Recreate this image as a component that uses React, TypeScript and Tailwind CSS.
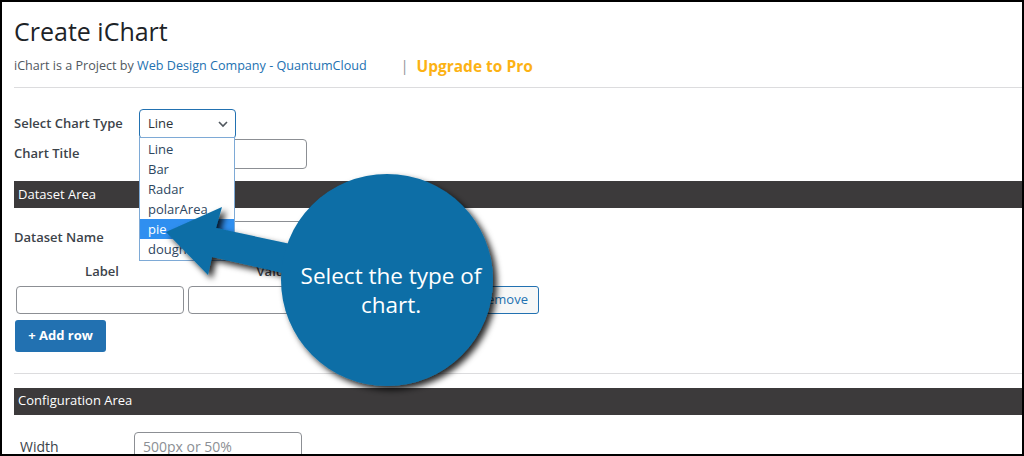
import React from "react";

const font = "font-['Segoe_UI','Open_Sans','Noto_Sans',sans-serif]";

function Bar({ children }: { children: React.ReactNode }) {
  return (
    <div className="h-[27px] bg-[#3c3a3b] flex items-center pl-[4px] text-white text-[13px]">
      {children}
    </div>
  );
}

export default function App() {
  const options = ["Line", "Bar", "Radar", "polarArea", "pie", "dough"];
  return (
    <div
      className={`relative w-[1024px] h-[456px] overflow-hidden bg-white border-2 border-black ${font} text-[#1d2327]`}
    >
      <div className="pl-[12px]">
        <h1 className="pt-[13px] text-[25px] leading-[32px] text-[#1d2327]">Create iChart</h1>
        <div className="mt-[9px] text-[12.6px] leading-[20px] text-[#50575e] flex items-center">
          <span>iChart is a Project by&nbsp;</span>
          <span className="text-[#2271b1]">Web Design Company - QuantumCloud</span>
          <span className="ml-[34px] mr-[8px] text-[#8c8f94] text-[14px]">|</span>
          <span className="font-bold text-[#fcb214] text-[15.5px]">Upgrade to Pro</span>
        </div>
        <div className="mt-[11px] h-px bg-[#dcdcde]" />

        <div className="mt-[21px] flex items-center h-[30px]">
          <div className="w-[125px] text-[13px] font-semibold text-[#3c434a]">Select Chart Type</div>
          <div className="w-[97px] h-[30px] border border-[#2271b1] rounded-[4px] flex items-center justify-between pl-[8px] pr-[6px] text-[13px] text-[#2c3338]">
            <span>Line</span>
            <svg width="12" height="12" viewBox="0 0 12 12">
              <path d="M2 4l4 4 4-4" fill="none" stroke="#50575e" strokeWidth="1.6" />
            </svg>
          </div>
        </div>
        <div className="flex items-center h-[30px]">
          <div className="w-[125px] text-[13px] font-semibold text-[#3c434a]">Chart Title</div>
          <div className="w-[168px] h-[30px] border border-[#8c8f94] rounded-[4px]" />
        </div>

        <div className="mt-[12px]">
          <Bar>Dataset Area</Bar>
        </div>

        <div className="mt-[13px] flex items-center h-[30px]">
          <div className="w-[125px] text-[13px] font-semibold text-[#3c434a] pt-[3px]">Dataset Name</div>
          <div className="w-[168px] h-[30px] border border-[#8c8f94] rounded-[4px]" />
        </div>

        <div className="mt-[11px] flex text-[13px] font-semibold text-[#3c434a] pl-[2px]">
          <div className="w-[172px] text-center">Label</div>
          <div className="w-[172px] text-center">Value</div>
        </div>
        <div className="mt-[4px] flex items-center gap-[4px] pl-[2px]">
          <div className="w-[168px] h-[28px] border border-[#8c8f94] rounded-[4px]" />
          <div className="w-[168px] h-[28px] border border-[#8c8f94] rounded-[4px]" />
        </div>
        <div className="mt-[6px] pl-[1px]">
          <div className="w-[91px] h-[32px] bg-[#2271b1] rounded-[3px] flex items-center justify-center text-white text-[13px] font-bold">
            + Add row
          </div>
        </div>

        <div className="mt-[21px] h-px bg-[#dcdcde]" />
        <div className="mt-[14px]">
          <Bar>Configuration Area</Bar>
        </div>
        <div className="mt-[17px] flex items-center h-[30px]">
          <div className="w-[120px] pl-[6px] text-[14px] text-[#3c434a]">Width</div>
          <div className="w-[168px] h-[30px] border border-[#8c8f94] rounded-[4px] flex items-center pl-[8px] text-[14px] text-[#8c8f94]">
            500px or 50%
          </div>
        </div>
      </div>

      {/* Remove button (partly hidden) */}
      <div className="absolute left-[440px] top-[284px] w-[97px] h-[28px] border border-[#2271b1] rounded-[3px] bg-[#f6f7f7] flex items-center justify-end pr-[10px] text-[13px] text-[#2271b1]">
        Remove
      </div>

      {/* Open dropdown list */}
      <div className="absolute left-[137px] top-[135px] w-[96px] border border-[#7eaad6] bg-white py-[1px]">
        {options.map((o) => (
          <div
            key={o}
            className={`h-[20px] leading-[20px] pl-[8px] text-[13px] ${
              o === "pie" ? "bg-[#2f8ff0] text-white" : "text-[#2c4660]"
            }`}
          >
            {o}
          </div>
        ))}
      </div>

      {/* Callout */}
      <svg
        className="absolute left-[-2px] top-[-2px] pointer-events-none"
        width="1024"
        height="456"
        viewBox="0 0 1024 456"
      >
        <defs>
          <filter id="sh" x="-20%" y="-20%" width="140%" height="140%">
            <feDropShadow dx="4" dy="4" stdDeviation="3" floodColor="#000" floodOpacity="0.85" />
          </filter>
        </defs>
        <g filter="url(#sh)" fill="#0b6ea6">
          <polygon points="166,232 222,207 216,228 300,246 296,276 212,257 208,275" />
          <circle cx="387" cy="280" r="106" />
        </g>
        <text
          x="391"
          y="284"
          textAnchor="middle"
          fill="#fff"
          fontSize="22.5"
          fontFamily="'Open Sans','Noto Sans',sans-serif"
        >
          Select the type of
        </text>
        <text
          x="391"
          y="313"
          textAnchor="middle"
          fill="#fff"
          fontSize="22.5"
          fontFamily="'Open Sans','Noto Sans',sans-serif"
        >
          chart.
        </text>
      </svg>
    </div>
  );
}
